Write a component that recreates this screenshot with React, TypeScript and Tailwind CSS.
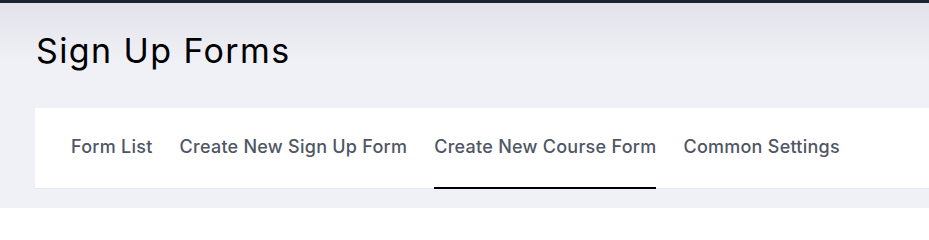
import React from "react";

const tabs = [
  { label: "Form List", active: false },
  { label: "Create New Sign Up Form", active: false },
  { label: "Create New Course Form", active: true },
  { label: "Common Settings", active: false },
];

export default function App() {
  return (
    <div
      className="w-[929px] h-[208px] overflow-hidden bg-[#f0f1f6] flex flex-col"
      style={{ fontFamily: "Inter, 'Noto Sans', sans-serif" }}
    >
      <div className="h-[3px] bg-[#1e2134] shrink-0" />
      <div className="bg-gradient-to-b from-[#e3e2eb] to-[#f0f1f6] h-[60px] shrink-0 pl-[36px] pt-[28px]">
        <h1 className="text-[34px] leading-[40px] font-normal text-black tracking-[1.4px]">
          Sign Up Forms
        </h1>
      </div>
      <div className="ml-[35px] mt-[45px] h-[81px] shrink-0 bg-white border-b border-[#e6e7ec] flex items-stretch pl-[36px] gap-[27px]">
        {tabs.map((t) => (
          <div
            key={t.label}
            className={
              "flex items-center text-[18px] font-medium text-[#4f5665] tracking-[0.25px] border-b-2 -mb-[1px] " +
              (t.active ? "border-black" : "border-transparent")
            }
          >
            <span className="pb-[2px]">{t.label}</span>
          </div>
        ))}
      </div>
    </div>
  );
}
